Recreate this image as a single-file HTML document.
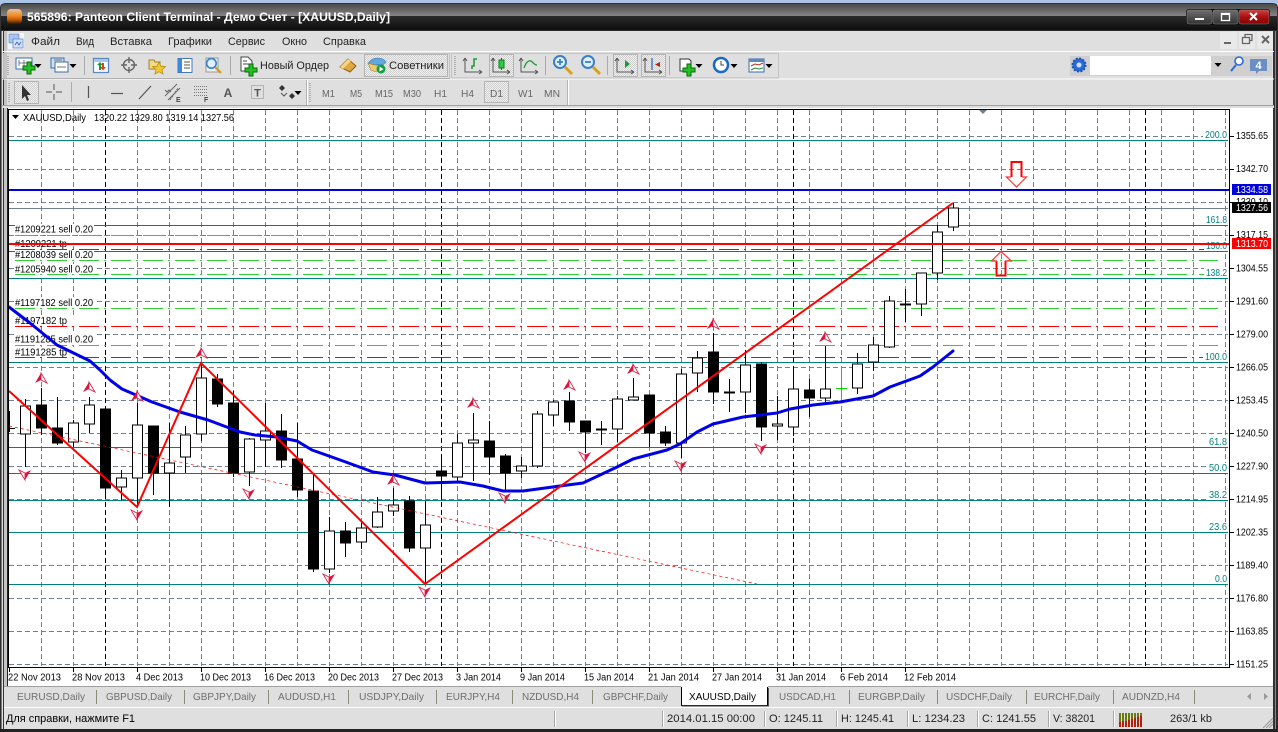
<!DOCTYPE html>
<html><head><meta charset="utf-8"><style>
html,body{margin:0;padding:0;background:#a9c4e6;width:1278px;height:732px;overflow:hidden}
svg{display:block;position:absolute;left:0;top:0}
text{font-family:"Liberation Sans","DejaVu Sans",sans-serif;font-size:10.5px;fill:#000;white-space:pre}
.m{font-size:11px;fill:#222}
.tf{font-size:10.5px;fill:#666}
.tb{font-size:10.5px;fill:#6f6f6f}
.l{fill:#008080;font-size:10.5px}
.s{font-size:11px;fill:#222}
.c path,.c rect,.c line{shape-rendering:crispEdges}
</style></head><body>
<svg width="1278" height="732" viewBox="0 0 1278 732" xmlns="http://www.w3.org/2000/svg">
<defs>
<linearGradient id="tg" x1="0" y1="0" x2="0" y2="1"><stop offset="0" stop-color="#4a4a4a"/><stop offset="1" stop-color="#858585"/></linearGradient>
<linearGradient id="tk" x1="0" y1="0" x2="0" y2="1"><stop offset="0" stop-color="#2a2a2a"/><stop offset="1" stop-color="#0e0e0e"/></linearGradient>
<linearGradient id="ap" x1="0" y1="0" x2="0" y2="1"><stop offset="0" stop-color="#e9c29a"/><stop offset=".45" stop-color="#f08a20"/><stop offset=".7" stop-color="#c85a08"/><stop offset="1" stop-color="#2a1a08"/></linearGradient>
<linearGradient id="cb" x1="0" y1="0" x2="0" y2="1"><stop offset="0" stop-color="#6e6e6e"/><stop offset="1" stop-color="#333"/></linearGradient>
<linearGradient id="cr" x1="0" y1="0" x2="0" y2="1"><stop offset="0" stop-color="#d04040"/><stop offset=".5" stop-color="#a81010"/><stop offset="1" stop-color="#800"/></linearGradient>
<pattern id="dt" width="2" height="2" patternUnits="userSpaceOnUse"><rect width="2" height="2" fill="#f0f0f0"/><rect width="1" height="1" fill="#cfcfcf"/><rect x="1" y="1" width="1" height="1" fill="#cfcfcf"/></pattern>
<g id="plus"><path d="M-2-6h4v4h4v4h-4v4h-4v-4h-4v-4h4z" fill="#25c025" stroke="#0a6a0a"/></g>
<g id="fu"><path d="M0-5L-6 5L0 2z" fill="#dc143c"/><path d="M0-5L6 5L0 2z" fill="#fff" stroke="#dc143c" stroke-width=".8"/></g>
<g id="fd"><path d="M0 5L-6-5L0-2z" fill="#fff" stroke="#dc143c" stroke-width=".8"/><path d="M0 5L6-5L0-2z" fill="#dc143c"/></g>
<path id="dd" d="M-3.5-2h7L0 2z" fill="#000"/>
<g id="ax"><path d="M-8-7V7H9M-8-7l-2 3M-8-7l2 3M9 7l-3-2M9 7l-3 2" fill="none" stroke="#555" stroke-width="1"/></g>
<g id="zm"><circle cx="-2" cy="-2" r="6" fill="#dff0ff" stroke="#3a7fc8" stroke-width="2"/><path d="M3 3l7 7" stroke="#d4a020" stroke-width="3"/></g>
</defs>

<!-- desktop + window title -->
<rect x="0" y="0" width="1278" height="732" fill="#a9c4e6"/>
<path d="M0 732V8Q0 3 6 3H1272Q1278 3 1278 8V732Z" fill="#333"/>
<path d="M1 16V8Q1 4 6 4H1272Q1277 4 1277 8V16Z" fill="url(#tg)"/>
<rect x="1" y="16" width="1276" height="14" fill="url(#tk)"/>
<rect x="7" y="9" width="15" height="15" rx="4" fill="url(#ap)"/>
<text x="27" y="21" style="font-size:12px;font-weight:bold;fill:#fff" textLength="363" lengthAdjust="spacingAndGlyphs">565896: Panteon Client Terminal - Демо Счет - [XAUUSD,Daily]</text>
<rect x="1186" y="9" width="84" height="16" rx="3" fill="#111"/>
<rect x="1187" y="10" width="25" height="14" rx="2" fill="url(#cb)" stroke="#888" stroke-width=".5"/>
<rect x="1213" y="10" width="25" height="14" rx="2" fill="url(#cb)" stroke="#888" stroke-width=".5"/>
<rect x="1239" y="10" width="30" height="14" rx="2" fill="url(#cr)" stroke="#888" stroke-width=".5"/>
<rect x="1195" y="18" width="9" height="2" fill="#fff"/>
<rect x="1221.5" y="13.5" width="8" height="7" fill="none" stroke="#fff" stroke-width="1.3"/><rect x="1221" y="13" width="9" height="2" fill="#fff"/>
<path d="M1250 13l7 7M1257 13l-7 7" stroke="#fff" stroke-width="2"/>

<!-- chrome body -->
<rect x="0" y="30" width="1278" height="702" fill="#2b2b2b"/>
<rect x="2" y="31" width="1272" height="698" fill="#dfdfdf"/>
<rect x="1" y="31" width="1" height="698" fill="#7a7a7a"/>
<rect x="3" y="31" width="1" height="698" fill="#333"/>
<rect x="4" y="31" width="3" height="698" fill="#c4c4c4"/>
<rect x="1273" y="31" width="2" height="698" fill="#333"/>
<rect x="1275" y="31" width="1" height="698" fill="#888"/>
<rect x="0" y="729" width="1278" height="3" fill="#222"/>

<g class="c">
<rect x="2" y="51" width="1272" height="1" fill="#fff"/>
<rect x="2" y="78.5" width="1272" height="1" fill="#fff"/>
<path d="M3.5 53.5H449.5V78M451.5 78V53.5H778.5V78.5" fill="none" stroke="#c4c4c4"/>
<path d="M3.5 53V78M451.5 78H779" fill="none" stroke="#b8b8b8"/>
<path d="M2 78.5H450" stroke="#b0b0b0"/>
<path d="M307.5 80V105M568.5 80V105" stroke="#fff"/>
<path d="M306.5 80V105M567.5 80V105" stroke="#b4b4b4"/>
<rect x="2" y="105" width="1272" height="1" fill="#a0a0a0"/>
<rect x="2" y="106" width="1272" height="2" fill="#dfdfdf"/>
</g>

<!-- menu -->
<rect x="8" y="33" width="16" height="16" fill="#f2f6fc"/><rect x="9" y="34" width="10" height="9" fill="#a8c4ee" stroke="#5a7fc0" stroke-width=".6"/><rect x="13" y="39" width="10" height="9" fill="#cfe0f8" stroke="#4a70b8" stroke-width=".6"/><path d="M15 45l2-3 2 3 2-3" fill="none" stroke="#2a50a0" stroke-width=".7"/>
<text class="m" x="31" y="45" textLength="29" lengthAdjust="spacingAndGlyphs">Файл</text>
<text class="m" x="76" y="45" textLength="18" lengthAdjust="spacingAndGlyphs">Вид</text>
<text class="m" x="110" y="45" textLength="42" lengthAdjust="spacingAndGlyphs">Вставка</text>
<text class="m" x="168" y="45" textLength="44" lengthAdjust="spacingAndGlyphs">Графики</text>
<text class="m" x="228" y="45" textLength="37" lengthAdjust="spacingAndGlyphs">Сервис</text>
<text class="m" x="282" y="45" textLength="25" lengthAdjust="spacingAndGlyphs">Окно</text>
<text class="m" x="323" y="45" textLength="43" lengthAdjust="spacingAndGlyphs">Справка</text>
<!-- mdi buttons -->
<rect x="1220" y="32" width="17" height="17" fill="#e9e9e9"/><rect x="1239" y="32" width="16" height="17" fill="#e9e9e9"/><rect x="1257" y="32" width="16" height="17" fill="#e9e9e9"/>
<rect x="1224" y="42" width="7" height="2" fill="#666"/>
<path d="M1242.5 37.5h7v6h-7zM1245 37v-2.5h7v6h-2.5" fill="none" stroke="#666" stroke-width="1.3"/>
<path d="M1262 36l7 7M1269 36l-7 7" stroke="#666" stroke-width="2"/>

<!-- toolbar row 1 -->
<path d="M8 56v20" stroke="#b0b0b0" stroke-width="2" stroke-dasharray="1 1"/>
<rect x="16" y="58" width="16" height="11" fill="#fff" stroke="#3a6ea8"/><path d="M19 60v6M19 63h9M24 60v6" stroke="#557" stroke-width=".8" fill="none"/><use href="#plus" x="29" y="68"/><use href="#dd" x="38" y="66"/>
<rect x="51" y="58" width="13" height="10" fill="#cfe0f5" stroke="#3a6ea8"/><rect x="55" y="62" width="13" height="10" fill="#fff" stroke="#3a6ea8"/><path d="M57 67h9M54 60h8" stroke="#444" stroke-width=".8"/><use href="#dd" x="73" y="66"/>
<rect x="84" y="56" width="1" height="19" fill="#aaa"/>
<rect x="93.5" y="58.5" width="15" height="14" fill="#fff" stroke="#5a8ac4" stroke-width="1.3"/><rect x="94" y="59" width="14" height="3" fill="#a8c8ec"/><path d="M99 70v-5h-2l3-3 3 3h-2v5z" fill="#1a9a30"/><path d="M104 63v4h2l-3 3.5-3-3.5h2v-4z" fill="#e04020"/>
<g fill="none" stroke="#666" stroke-width="1.4"><circle cx="129" cy="65" r="5.5"/><path d="M129 57v6M129 67v6M121 65h6M131 65h6"/></g>
<path d="M149 60h5l1 2h5v7h-11z" fill="#f4d98a" stroke="#a08030"/><path d="M159 62l1.900 4.200 4.600.4-3.500 3 1 4.500-4-2.400-4 2.400 1-4.500-3.500-3 4.600-.4z" fill="#f0c830" stroke="#b89010" stroke-width=".8"/>
<rect x="178" y="58.5" width="14" height="14" fill="#fff" stroke="#4478b8"/><rect x="178" y="59" width="4" height="13" fill="#3a8ae0"/><path d="M184 62h6M184 65h6M184 68h6" stroke="#555"/>
<rect x="206" y="58" width="12" height="14" fill="#eee" stroke="#999"/><use href="#zm" transform="translate(213 65) scale(.8)"/>
<rect x="230" y="56" width="1" height="19" fill="#aaa"/>
<path d="M241 57h7l4 4v10h-11z" fill="#fff" stroke="#444"/><path d="M243 61h4M243 64h6" stroke="#444"/><use href="#plus" x="251" y="70"/>
<text class="m" x="260" y="69" textLength="69" lengthAdjust="spacingAndGlyphs">Новый Ордер</text>
<path d="M340 67l8-8 8 7-6 6z" fill="#e0a840" stroke="#906010"/><path d="M340 67l8-8 3 2-8 8z" fill="#f4d488"/>
<rect x="364.5" y="54.5" width="83" height="22" fill="url(#dt)" stroke="#b4b4b4"/>
<path d="M368 64c2-4 6-6 9-6s7 1 9 4l-3 3z" fill="#5fa8e0" stroke="#3a78b0" stroke-width=".6"/><path d="M368 63l3 7c4 2 8 2 10 0l2-5c-5 1-10 0-15-2z" fill="#f0cc70" stroke="#a08030" stroke-width=".6"/><circle cx="381" cy="69" r="4.500" fill="#10a040"/><path d="M379.500 66.500l4 2.500-4 2.500z" fill="#fff"/>
<text class="m" x="389" y="69" textLength="55" lengthAdjust="spacingAndGlyphs">Советники</text>
<!-- toolbar 2 icons -->
<path d="M455 56v20" stroke="#b0b0b0" stroke-width="2" stroke-dasharray="1 1"/>
<use href="#ax" x="473" y="65"/><path d="M472 69v-3h2v-7h3" fill="none" stroke="#1a9a30" stroke-width="1.5"/>
<rect x="489.5" y="54.5" width="24" height="22" fill="url(#dt)" stroke="#b4b4b4"/>
<use href="#ax" x="501" y="65"/><rect x="499" y="60" width="5" height="8" fill="#2ecc40" stroke="#0a7a20"/><path d="M501.5 58v2M501.5 68v2" stroke="#0a7a20"/>
<use href="#ax" x="529" y="65"/><path d="M524 68c2-6 5-8 7-7s3 4 6 4" fill="none" stroke="#1a9a30" stroke-width="1.3"/>
<rect x="545" y="56" width="1" height="19" fill="#aaa"/>
<g transform="translate(562 64)"><use href="#zm"/><path d="M-5-2h6M-2-5v6" stroke="#3a7fc8" stroke-width="1.8"/></g>
<g transform="translate(590 64)"><use href="#zm"/><path d="M-5-2h6" stroke="#3a7fc8" stroke-width="1.8"/></g>
<rect x="607" y="56" width="1" height="19" fill="#aaa"/>
<rect x="613.5" y="54.5" width="24" height="22" fill="url(#dt)" stroke="#b4b4b4"/><use href="#ax" x="625" y="65"/><path d="M625 60v8l5-4z" fill="#1a9a30"/>
<rect x="641.5" y="54.5" width="24" height="22" fill="url(#dt)" stroke="#b4b4b4"/><use href="#ax" x="653" y="65"/><path d="M652 58v12" stroke="#1a6ac0" stroke-width="1.2"/><path d="M660 62v5l-5-2.500z" fill="#c02010"/>
<rect x="669" y="56" width="1" height="19" fill="#aaa"/>
<path d="M680 59h9l2 2v10h-11z" fill="#fff" stroke="#333"/><use href="#plus" x="689" y="70"/><use href="#dd" x="699" y="66"/>
<circle cx="721" cy="65" r="7" fill="#fff" stroke="#1a68c0" stroke-width="2.5"/><path d="M721 61v4h3" stroke="#444" fill="none"/><use href="#dd" x="734" y="66"/>
<rect x="749" y="59" width="15" height="13" fill="#fff" stroke="#3a6ea8"/><rect x="749" y="59" width="15" height="3" fill="#5a8ac4"/><path d="M751 66l4-2 4 1 4-2" stroke="#b03020" fill="none"/><path d="M751 70l4-2 4 1 4-1" stroke="#1a8a30" fill="none"/><use href="#dd" x="769" y="66"/>

<!-- search -->
<rect x="1070" y="56" width="202" height="20" fill="#cfcfcf"/>
<circle cx="1079" cy="65" r="6.5" fill="#2a6ad8" stroke="#1a50b0" stroke-dasharray="2 1.4" stroke-width="2"/><circle cx="1079" cy="65" r="2.5" fill="#cfe0f8"/>
<rect x="1090" y="56" width="121" height="19" fill="#fff"/>
<use href="#dd" x="1218" y="65"/>
<path d="M1231 71l5-6" stroke="#2a6ad8" stroke-width="2"/><circle cx="1239" cy="61" r="4" fill="#fff" stroke="#2a6ad8" stroke-width="1.6"/>
<path d="M1250 59h17v12h-8l-3 3v-3h-6z" fill="#6a8fc4"/><text x="1258.5" y="69" text-anchor="middle" style="font-size:11px;font-weight:bold;fill:#fff">4</text>

<!-- toolbar row 2 -->
<path d="M9 83v20" stroke="#b0b0b0" stroke-width="2" stroke-dasharray="1 1"/>
<rect x="14.5" y="81.5" width="24" height="22" fill="url(#dt)" stroke="#b4b4b4"/>
<path d="M22 85v14l3-3 2 5 2-1-2-5h4z" fill="#333"/>
<path d="M54 84v6M54 94v6M46 92h6M56 92h6" stroke="#555" stroke-width="1"/>
<rect x="71" y="82" width="1" height="20" fill="#aaa"/>
<path d="M88.5 86v12M111 93.5h12M139 99l12-13" stroke="#555" stroke-width="1.2"/>
<g stroke="#666" fill="none"><path d="M165 96l12-12M168 100l12-12M165 90l2 2 2-2 2 2"/><path d="M170 100l8-12" stroke-dasharray="2 1"/></g>
<text x="176" y="102" style="font-size:7px;font-weight:bold;fill:#444">E</text>
<g stroke="#777" stroke-dasharray="1 1"><path d="M194 86.5h14M194 89.5h14M194 92.5h14M194 95.5h14"/></g>
<text x="204" y="102" style="font-size:7px;font-weight:bold;fill:#444">F</text>
<text x="228" y="97" text-anchor="middle" style="font-size:12px;font-weight:bold;fill:#555">A</text>
<rect x="251.5" y="85.5" width="12" height="13" fill="none" stroke="#888" stroke-dasharray="1 1"/>
<text x="257.5" y="96.5" text-anchor="middle" style="font-size:11px;font-weight:bold;fill:#555">T</text>
<path d="M282 85l3 3-3 3-3-3zM292 93l3 3-3 3-3-3z" fill="#333"/><path d="M281 93l3 3 3-3" fill="none" stroke="#555"/><use href="#dd" x="298" y="93"/>
<path d="M310 83v20" stroke="#b0b0b0" stroke-width="2" stroke-dasharray="1 1"/>
<text class="tf" x="322" y="97" textLength="13" lengthAdjust="spacingAndGlyphs">M1</text>
<text class="tf" x="350" y="97" textLength="12" lengthAdjust="spacingAndGlyphs">M5</text>
<text class="tf" x="375" y="97" textLength="18" lengthAdjust="spacingAndGlyphs">M15</text>
<text class="tf" x="403" y="97" textLength="18" lengthAdjust="spacingAndGlyphs">M30</text>
<text class="tf" x="434" y="97" textLength="13" lengthAdjust="spacingAndGlyphs">H1</text>
<text class="tf" x="461" y="97" textLength="13" lengthAdjust="spacingAndGlyphs">H4</text>
<rect x="484.5" y="81.5" width="24" height="21" fill="url(#dt)" stroke="#b4b4b4"/>
<text class="tf" x="490" y="97" textLength="13" lengthAdjust="spacingAndGlyphs">D1</text>
<text class="tf" x="518" y="97" textLength="15" lengthAdjust="spacingAndGlyphs">W1</text>
<text class="tf" x="544" y="97" textLength="16" lengthAdjust="spacingAndGlyphs">MN</text>

<!-- chart area -->
<rect x="7" y="108" width="1266" height="578" fill="#fff"/>
<g class="c">
<rect x="7" y="108" width="1" height="578" fill="#222"/>
<path fill="none" stroke="#708090" stroke-dasharray="5 3" d="M9 136.5H1228M9 169.5H1228M9 202.5H1228M9 235.5H1228M9 268.5H1228M9 301.5H1228M9 334.5H1228M9 367.5H1228M9 400.5H1228M9 433.5H1228M9 466.5H1228M9 499.5H1228M9 532.5H1228M9 565.5H1228M9 598.5H1228M9 631.5H1228M9 664.5H1228"/>
<path fill="none" stroke="#708090" stroke-dasharray="5 3" d="M41.5 110V666M73.5 110V666M137.5 110V666M169.5 110V666M201.5 110V666M233.5 110V666M265.5 110V666M297.5 110V666M329.5 110V666M361.5 110V666M393.5 110V666M425.5 110V666M457.5 110V666M489.5 110V666M521.5 110V666M553.5 110V666M585.5 110V666M617.5 110V666M649.5 110V666M681.5 110V666M713.5 110V666M745.5 110V666M777.5 110V666M809.5 110V666M841.5 110V666M873.5 110V666M905.5 110V666M937.5 110V666M969.5 110V666M1001.5 110V666M1033.5 110V666M1065.5 110V666M1097.5 110V666M1129.5 110V666M1161.5 110V666M1193.5 110V666M1225.5 110V666"/>
<path fill="none" stroke="#000" stroke-dasharray="5 3" d="M105.5 110V666M441.5 110V666M793.5 110V666M1145.5 110V666"/>
<path fill="none" stroke="#32cd32" stroke-dasharray="20 5 2 5" stroke-dashoffset="-5" d="M10 235.5H1218M10 260.5H1218M10 274.5H1218M10 308.5H1218M10 345.5H1218"/>
<path fill="none" stroke="#f00" stroke-dasharray="20 5 2 5" stroke-dashoffset="-5" d="M10 249.5H1218M10 326.5H1218M10 357.5H1218"/>
<path stroke="#708090" d="M9 208.5H1228"/>
<path stroke="#008080" d="M9 140.5H1228M9 225.5H1228M9 251.5H1228M9 278.5H1228M9 362.5H1228M9 447.5H1228M9 473.5H1228M9 500.5H1228M9 532.5H1228M9 584.5H1228"/>
<path fill="#fff" d="M15 224h79v11H15zM15 238h60v6H15zM15 250h79v10H15zM15 264h79v10H15zM15 297h79v11H15zM15 315h60v11H15zM15 334h79v11H15zM15 347h60v10H15z"/>
<path fill="#fff" d="M1203 129h25v11h-25zM1204 215h24v10h-24zM1204 241h24v10h-24zM1204 268h24v10h-24zM1203 352h25v10h-25zM1207 437h21v10h-21zM1207 463h21v10h-21zM1207 490h21v10h-21zM1207 522h21v10h-21zM1213 574h15v10h-15z"/>
</g>
<text x="15" y="232.5" textLength="78" lengthAdjust="spacingAndGlyphs">#1209221 sell 0.20</text>
<text x="15" y="247.2" textLength="52" lengthAdjust="spacingAndGlyphs">#1209221 tp</text>
<text x="15" y="258.2" textLength="78" lengthAdjust="spacingAndGlyphs">#1208039 sell 0.20</text>
<text x="15" y="272.5" textLength="78" lengthAdjust="spacingAndGlyphs">#1205940 sell 0.20</text>
<text x="15" y="306" textLength="78" lengthAdjust="spacingAndGlyphs">#1197182 sell 0.20</text>
<text x="15" y="324" textLength="52" lengthAdjust="spacingAndGlyphs">#1197182 tp</text>
<text x="15" y="342.5" textLength="78" lengthAdjust="spacingAndGlyphs">#1191285 sell 0.20</text>
<text x="15" y="355.5" textLength="52" lengthAdjust="spacingAndGlyphs">#1191285 tp</text>
<text class="l" x="1205" y="138" textLength="22" lengthAdjust="spacingAndGlyphs">200.0</text>
<text class="l" x="1206" y="223" textLength="21" lengthAdjust="spacingAndGlyphs">161.8</text>
<text class="l" x="1206" y="249" textLength="21" lengthAdjust="spacingAndGlyphs">150.0</text>
<text class="l" x="1206" y="276" textLength="21" lengthAdjust="spacingAndGlyphs">138.2</text>
<text class="l" x="1205" y="360" textLength="22" lengthAdjust="spacingAndGlyphs">100.0</text>
<text class="l" x="1209" y="445" textLength="18" lengthAdjust="spacingAndGlyphs">61.8</text>
<text class="l" x="1209" y="471" textLength="18" lengthAdjust="spacingAndGlyphs">50.0</text>
<text class="l" x="1209" y="498" textLength="18" lengthAdjust="spacingAndGlyphs">38.2</text>
<text class="l" x="1209" y="530" textLength="18" lengthAdjust="spacingAndGlyphs">23.6</text>
<text class="l" x="1215" y="582" textLength="12" lengthAdjust="spacingAndGlyphs">0.0</text>

<!-- candles -->
<g class="c">
<path fill="none" stroke="#000" d="M9.5 411V432M9 428.5H15M25.5 399V467M41.5 388V435M57.5 397V445M73.5 420V447M89.5 397V433M105.5 409V496M121.5 470V500M137.5 403V507M153.5 426V495M169.5 423V507M185.5 426V473M201.5 363V441M217.5 374V407M233.5 391V477M249.5 438V486M265.5 403V467M281.5 414V468M297.5 423V497M313.5 473V572M329.5 517V573M345.5 522V557M361.5 520V549M377.5 497V528M393.5 488V516M409.5 496V552M425.5 501V583M441.5 457V500M457.5 434V481M473.5 413V481M489.5 421V475M505.5 454V492M521.5 457V478M537.5 411V468M553.5 400V426M569.5 392V431M585.5 421V453M601.5 421V445M617.5 396V442M633.5 378V400M649.5 395V447M665.5 426V446M681.5 369V458M697.5 351V392M713.5 333V404M729.5 379V412M745.5 350V413M761.5 362V441M777.5 396V440M793.5 367V436M809.5 379V417M825.5 346V402M857.5 353V394M873.5 337V371M889.5 296V348M905.5 289V322M921.5 273V316M937.5 225V280M953.5 203V231"/>
<path fill="#fff" stroke="#000" d="M20.5 406h10v28h-10zM68.5 423h10v19h-10zM84.5 405h10v19h-10zM116.5 478h10v9h-10zM132.5 425h10v53h-10zM164.5 463h10v10h-10zM180.5 435h10v22h-10zM196.5 378h10v56h-10zM244.5 439h10v33h-10zM260.5 431h10v9h-10zM324.5 531h10v38h-10zM356.5 528h10v14h-10zM372.5 512h10v15h-10zM388.5 505h10v6h-10zM420.5 525h10v23h-10zM452.5 443h10v34h-10zM468.5 440h10v3h-10zM516.5 466h10v5h-10zM532.5 414h10v52h-10zM548.5 402h10v13h-10zM612.5 399h10v30h-10zM628.5 397h10v3h-10zM676.5 374h10v69h-10zM692.5 358h10v15h-10zM740.5 365h10v27h-10zM772.5 424h10v2h-10zM788.5 389h10v38h-10zM820.5 389h10v9h-10zM852.5 364h10v24h-10zM868.5 345h10v17h-10zM884.5 301h10v46h-10zM916.5 273h10v31h-10zM932.5 232h10v41h-10zM948.5 208h10v19h-10z"/>
<path fill="#000" stroke="#000" d="M36.5 405h10v23h-10zM52.5 428h10v15h-10zM100.5 409h10v79h-10zM148.5 426h10v47h-10zM212.5 379h10v25h-10zM228.5 403h10v70h-10zM276.5 431h10v29h-10zM292.5 459h10v31h-10zM308.5 491h10v78h-10zM340.5 531h10v12h-10zM404.5 501h10v47h-10zM436.5 471h10v5h-10zM484.5 441h10v16h-10zM500.5 456h10v17h-10zM564.5 401h10v21h-10zM580.5 421h10v11h-10zM596.5 429h10v1h-10zM644.5 395h10v38h-10zM660.5 432h10v11h-10zM708.5 352h10v40h-10zM724.5 392h10v1h-10zM756.5 364h10v63h-10zM804.5 390h10v8h-10zM900.5 304h10v1h-10z"/>
<path fill="none" stroke="#00e000" d="M841.5 366V401M836 388.5H847"/>
</g>

<!-- thin dashed trend -->
<path d="M9 426L757 584" stroke="#f00" stroke-width=".7" stroke-dasharray="3 3" fill="none"/>
<!-- MA -->
<polyline fill="none" stroke="#0000e6" stroke-width="3" stroke-linejoin="round" stroke-linecap="round" points="9,307 30,323 57,345 90,361 100,370 110,380 122,389 152,402 180,412 208,420 240,432 255,435 277,437 297,441 312,450 343,461 373,472 395,475 425,483 460,482 483,486 503,491 523,491 560,486 583,483 600,475 617,467 633,459 667,450 680,444 697,432 713,424 743,417 777,413 790,409 813,405 840,402 873,396 890,387 920,376 933,367 953,351"/>
<!-- zigzag -->
<polyline fill="none" stroke="#f00" stroke-width="2" points="9,391 137,507 201,363 425,584 953,203"/>

<!-- fractals -->
<use href="#fu" x="41" y="378"/><use href="#fu" x="89" y="387"/><use href="#fu" x="137" y="396"/><use href="#fu" x="201" y="353"/><use href="#fu" x="393" y="480"/><use href="#fu" x="473" y="403"/><use href="#fu" x="569" y="385"/><use href="#fu" x="633" y="369"/><use href="#fu" x="713" y="324"/><use href="#fu" x="825" y="337"/>
<use href="#fd" x="25" y="475"/><use href="#fd" x="137" y="515"/><use href="#fd" x="249" y="494"/><use href="#fd" x="329" y="579"/><use href="#fd" x="425" y="592"/><use href="#fd" x="505" y="498"/><use href="#fd" x="585" y="457"/><use href="#fd" x="681" y="466"/><use href="#fd" x="761" y="449"/>

<!-- horizontal levels on top -->
<g class="c">
<rect x="9" y="189" width="1220" height="2" fill="#0000d8"/>
<rect x="9" y="243" width="1220" height="2" fill="#f00"/>
</g>

<!-- big arrows -->
<path d="M1011.5 177V162H1021.5V177" fill="none" stroke="#f00" stroke-width="2"/>
<path d="M1011 177H1006.5L1016.5 187L1026.5 177H1022" fill="none" stroke="#f33" stroke-width="1.2"/>
<path d="M996.5 261V275.5H1005.5V261" fill="none" stroke="#f00" stroke-width="2"/>
<path d="M997 261H991.5L1001 251.5L1011.5 261H1005" fill="none" stroke="#f33" stroke-width="1.2"/>
<path d="M979 110h8l-4 4z" fill="#708090"/>

<!-- header -->
<path d="M12 115h7l-3.5 4z" fill="#000"/>
<text x="23" y="121" textLength="63" lengthAdjust="spacingAndGlyphs">XAUUSD,Daily</text>
<text x="94" y="121" textLength="140" lengthAdjust="spacingAndGlyphs">1320.22 1329.80 1319.14 1327.56</text>

<!-- frame -->
<g class="c">
<path d="M8.5 109.5H1229.5V667.5H8.5Z" fill="none" stroke="#000"/>
<path stroke="#000" d="M1230 136.5h4M1230 169.5h4M1230 202.5h4M1230 235.5h4M1230 268.5h4M1230 301.5h4M1230 334.5h4M1230 367.5h4M1230 400.5h4M1230 433.5h4M1230 466.5h4M1230 499.5h4M1230 532.5h4M1230 565.5h4M1230 598.5h4M1230 631.5h4M1230 664.5h4"/>
<path stroke="#000" d="M9.5 668v4M73.5 668v4M137.5 668v4M201.5 668v4M265.5 668v4M329.5 668v4M393.5 668v4M457.5 668v4M521.5 668v4M585.5 668v4M649.5 668v4M713.5 668v4M777.5 668v4M841.5 668v4M905.5 668v4"/>
</g>
<!-- price axis -->
<text x="1236" y="139" textLength="32" lengthAdjust="spacingAndGlyphs">1355.65</text>
<text x="1236" y="172" textLength="32" lengthAdjust="spacingAndGlyphs">1342.70</text>
<text x="1236" y="205" textLength="32" lengthAdjust="spacingAndGlyphs">1330.10</text>
<text x="1236" y="238" textLength="32" lengthAdjust="spacingAndGlyphs">1317.15</text>
<text x="1236" y="271.5" textLength="32" lengthAdjust="spacingAndGlyphs">1304.55</text>
<text x="1236" y="304.5" textLength="32" lengthAdjust="spacingAndGlyphs">1291.60</text>
<text x="1236" y="337.5" textLength="32" lengthAdjust="spacingAndGlyphs">1279.00</text>
<text x="1236" y="370.5" textLength="32" lengthAdjust="spacingAndGlyphs">1266.05</text>
<text x="1236" y="403.5" textLength="32" lengthAdjust="spacingAndGlyphs">1253.45</text>
<text x="1236" y="436.5" textLength="32" lengthAdjust="spacingAndGlyphs">1240.50</text>
<text x="1236" y="469.5" textLength="32" lengthAdjust="spacingAndGlyphs">1227.90</text>
<text x="1236" y="502.5" textLength="32" lengthAdjust="spacingAndGlyphs">1214.95</text>
<text x="1236" y="535.5" textLength="32" lengthAdjust="spacingAndGlyphs">1202.35</text>
<text x="1236" y="568.5" textLength="32" lengthAdjust="spacingAndGlyphs">1189.40</text>
<text x="1236" y="601.5" textLength="32" lengthAdjust="spacingAndGlyphs">1176.80</text>
<text x="1236" y="634.5" textLength="32" lengthAdjust="spacingAndGlyphs">1163.85</text>
<text x="1236" y="667.5" textLength="32" lengthAdjust="spacingAndGlyphs">1151.25</text>
<rect x="1232" y="184" width="39" height="11" fill="#0000d8"/>
<rect x="1232" y="202" width="39" height="11" fill="#000"/>
<rect x="1232" y="238" width="39" height="11" fill="#f00"/>
<text x="1236" y="193" textLength="32" lengthAdjust="spacingAndGlyphs" style="fill:#fff">1334.58</text>
<text x="1236" y="211" textLength="32" lengthAdjust="spacingAndGlyphs" style="fill:#fff">1327.56</text>
<text x="1236" y="247" textLength="32" lengthAdjust="spacingAndGlyphs" style="fill:#fff">1313.70</text>

<!-- date axis -->
<text x="8" y="680.5" textLength="53" lengthAdjust="spacingAndGlyphs">22 Nov 2013</text>
<text x="72" y="680.5" textLength="53" lengthAdjust="spacingAndGlyphs">28 Nov 2013</text>
<text x="136" y="680.5" textLength="47" lengthAdjust="spacingAndGlyphs">4 Dec 2013</text>
<text x="200" y="680.5" textLength="51" lengthAdjust="spacingAndGlyphs">10 Dec 2013</text>
<text x="264" y="680.5" textLength="51" lengthAdjust="spacingAndGlyphs">16 Dec 2013</text>
<text x="328" y="680.5" textLength="51" lengthAdjust="spacingAndGlyphs">20 Dec 2013</text>
<text x="392" y="680.5" textLength="51" lengthAdjust="spacingAndGlyphs">27 Dec 2013</text>
<text x="456" y="680.5" textLength="45" lengthAdjust="spacingAndGlyphs">3 Jan 2014</text>
<text x="520" y="680.5" textLength="45" lengthAdjust="spacingAndGlyphs">9 Jan 2014</text>
<text x="584" y="680.5" textLength="50" lengthAdjust="spacingAndGlyphs">15 Jan 2014</text>
<text x="648" y="680.5" textLength="51" lengthAdjust="spacingAndGlyphs">21 Jan 2014</text>
<text x="712" y="680.5" textLength="50" lengthAdjust="spacingAndGlyphs">27 Jan 2014</text>
<text x="776" y="680.5" textLength="50" lengthAdjust="spacingAndGlyphs">31 Jan 2014</text>
<text x="840" y="680.5" textLength="48" lengthAdjust="spacingAndGlyphs">6 Feb 2014</text>
<text x="904" y="680.5" textLength="52" lengthAdjust="spacingAndGlyphs">12 Feb 2014</text>

<!-- tabs -->
<g class="c">
<rect x="4" y="686" width="1269" height="1" fill="#a0a0a0"/>
<rect x="4" y="687" width="1269" height="20" fill="#dfdfdf"/>
<rect x="4" y="707" width="1269" height="1" fill="#fff"/>
<path stroke="#8a8a7a" d="M96.5 690v14M184.5 690v14M268.5 690v14M348.5 690v14M436.5 690v14M512.5 690v14M592.5 690v14M849.5 690v14M937.5 690v14M1026.5 690v14M1113.5 690v14M1194.5 690v14"/>
<rect x="681" y="686" width="87" height="20" fill="#fff"/>
<path d="M681.5 687V705.5H767.5V687" fill="none" stroke="#000"/>
<path d="M768.5 688V706H682" fill="none" stroke="#555"/>
</g>
<text class="tb" x="17" y="700" textLength="68" lengthAdjust="spacingAndGlyphs">EURUSD,Daily</text>
<text class="tb" x="106" y="700" textLength="66" lengthAdjust="spacingAndGlyphs">GBPUSD,Daily</text>
<text class="tb" x="193" y="700" textLength="63" lengthAdjust="spacingAndGlyphs">GBPJPY,Daily</text>
<text class="tb" x="278" y="700" textLength="58" lengthAdjust="spacingAndGlyphs">AUDUSD,H1</text>
<text class="tb" x="359" y="700" textLength="65" lengthAdjust="spacingAndGlyphs">USDJPY,Daily</text>
<text class="tb" x="446" y="700" textLength="54" lengthAdjust="spacingAndGlyphs">EURJPY,H4</text>
<text class="tb" x="522" y="700" textLength="57" lengthAdjust="spacingAndGlyphs">NZDUSD,H4</text>
<text class="tb" x="603" y="700" textLength="65" lengthAdjust="spacingAndGlyphs">GBPCHF,Daily</text>
<text x="689" y="700" textLength="67" lengthAdjust="spacingAndGlyphs">XAUUSD,Daily</text>
<text class="tb" x="779" y="700" textLength="57" lengthAdjust="spacingAndGlyphs">USDCAD,H1</text>
<text class="tb" x="858" y="700" textLength="67" lengthAdjust="spacingAndGlyphs">EURGBP,Daily</text>
<text class="tb" x="946" y="700" textLength="66" lengthAdjust="spacingAndGlyphs">USDCHF,Daily</text>
<text class="tb" x="1034" y="700" textLength="66" lengthAdjust="spacingAndGlyphs">EURCHF,Daily</text>
<text class="tb" x="1122" y="700" textLength="58" lengthAdjust="spacingAndGlyphs">AUDNZD,H4</text>
<path d="M1251 693v7l-4-3.5zM1264 693v7l4-3.5z" fill="#9a9a9a"/>

<!-- status bar -->
<rect x="4" y="708" width="1269" height="21" fill="#dfdfdf"/>
<g class="c"><path stroke="#a8a8a8" d="M554.5 711v16M662.5 711v16M764.5 711v16M836.5 711v16M907.5 711v16M977.5 711v16M1048.5 711v16M1113.5 711v16"/>
<path stroke="#fff" d="M555.5 711v16M663.5 711v16M765.5 711v16M837.5 711v16M908.5 711v16M978.5 711v16M1049.5 711v16M1114.5 711v16"/></g>
<text class="s" x="6" y="722" textLength="129" lengthAdjust="spacingAndGlyphs" style="fill:#000">Для справки, нажмите F1</text>
<text class="s" x="667" y="722" textLength="88" lengthAdjust="spacingAndGlyphs">2014.01.15 00:00</text>
<text class="s" x="769" y="722" textLength="54" lengthAdjust="spacingAndGlyphs">O: 1245.11</text>
<text class="s" x="841" y="722" textLength="53" lengthAdjust="spacingAndGlyphs">H: 1245.41</text>
<text class="s" x="912" y="722" textLength="53" lengthAdjust="spacingAndGlyphs">L: 1234.23</text>
<text class="s" x="982" y="722" textLength="54" lengthAdjust="spacingAndGlyphs">C: 1241.55</text>
<text class="s" x="1053" y="722" textLength="42" lengthAdjust="spacingAndGlyphs">V: 38201</text>
<text class="s" x="1170" y="722" textLength="42" lengthAdjust="spacingAndGlyphs">263/1 kb</text>
<g class="c"><path d="M1119 727h2v-14h-2zM1122 727h2v-14h-2zM1125 727h2v-14h-2zM1128 727h2v-14h-2zM1131 727h2v-14h-2zM1134 727h2v-14h-2zM1137 727h2v-14h-2zM1140 727h2v-14h-2z" fill="#6a7a10"/>
<path d="M1119 727h2v-5h-2zM1122 727h2v-6h-2zM1125 727h2v-6h-2zM1128 727h2v-7h-2zM1131 727h2v-8h-2zM1134 727h2v-9h-2zM1137 727h2v-10h-2zM1140 727h2v-11h-2z" fill="#b02010"/></g>
<path d="M1263 728l10-10M1266 728l7-7M1269 728l4-4" stroke="#999" stroke-width="1"/>
</svg>
</body></html>
